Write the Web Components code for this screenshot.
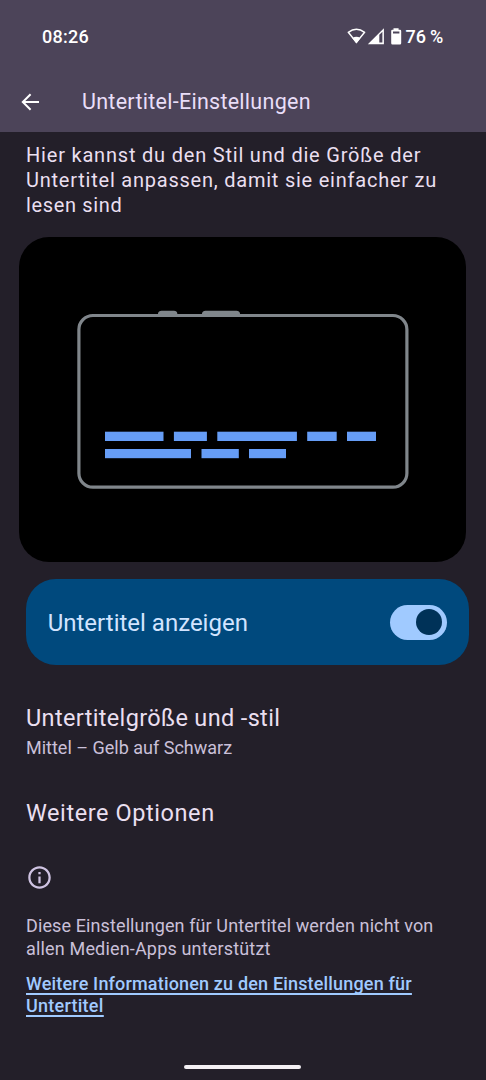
<!DOCTYPE html>
<html lang="de">
<head>
<meta charset="utf-8">
<title>Untertitel-Einstellungen</title>
<style>
html,body{margin:0;height:100%}
body{background:#231f29;font-family:Roboto,"Liberation Sans",sans-serif;overflow:hidden}
</style>
</head>
<body>
<caption-settings></caption-settings>
<script>
const define = (name, html, init) => customElements.define(name, class extends HTMLElement {
  constructor() {
    super();
    this.attachShadow({ mode: 'open' }).innerHTML = html;
  }
  connectedCallback() { if (init) init(this); }
});

// One line of text; size, leading and tracking come from attributes.
define('text-line', `<style>
:host{display:block;white-space:nowrap}
</style><slot></slot>`, el => {
  el.style.fontSize = el.getAttribute('size') + 'px';
  el.style.lineHeight = el.getAttribute('leading') + 'px';
  el.style.letterSpacing = (el.getAttribute('tracking') || 0) + 'px';
});

define('status-bar', `<style>
:host{display:flex;box-sizing:border-box;height:72px;align-items:center;justify-content:space-between;padding:1px 43px 0 42px;color:#fff;font-weight:500}
.right{display:flex;align-items:center}
svg{display:block;margin-top:-1px}
</style>
<text-line size="18" leading="71" tracking=".25">08:26</text-line>
<div class="right">
<svg width="60" height="20" viewBox="346 26 60 20" fill="none">
<path d="M348.3 32.3Q356.4 26.2 364.6 32.3L356.4 42.4Z" stroke="#fff" stroke-width="1.5" stroke-linejoin="round"/>
<path d="M352.4 38Q356.4 35.6 360.4 38L356.4 43.6Z" fill="#fff"/>
<path fill-rule="evenodd" d="M367.8 44.2L383.9 28.3V44.2ZM379.3 34.8V42.6H382.4V31.7Z" fill="#fff"/>
<path fill-rule="evenodd" d="M393.5 28.2H398.6V29.8H400Q401.2 29.8 401.2 31V43.2Q401.2 44.4 400 44.4H392.4Q391.2 44.4 391.2 43.2V31Q391.2 29.8 392.4 29.8H393.5ZM393 31.6V33.5H399.4V31.6Z" fill="#fff"/>
</svg>
<text-line size="18" leading="71" tracking="-.2">76 %</text-line>
</div>`);

define('app-bar', `<style>
:host{display:flex;height:60px;align-items:center;color:#e9def8}
svg{display:block;margin:0 42px 0 18px}
</style>
<svg width="22" height="22" viewBox="0 0 22 22" fill="none" stroke="#fff" stroke-width="2"><path d="M21 11H5M12.6 3.2L4.8 11L12.6 18.8"/></svg>
<text-line size="21.5" leading="60" tracking=".27"><slot></slot></text-line>`);

define('caption-preview', `<style>
:host{display:block;width:447px;height:325px;margin:19px 0 0 19px;background:#000;border-radius:30px;overflow:hidden}
svg{display:block}
</style>
<svg width="447" height="325" viewBox="19 237 447 325">
<path fill="#80868b" d="M158 315V313.5Q158.5 310.8 161.5 310.8H174Q177 310.8 177.3 313.5V315ZM202 315V313.5Q202.5 310.8 205.5 310.8H236.5Q239.5 310.8 240 313.5V315Z"/>
<rect x="78.9" y="315.5" width="328" height="171.7" rx="14" fill="none" stroke="#80868b" stroke-width="3.2"/>
<g fill="#669df6">
<rect x="105" y="431.7" width="58.5" height="9.3"/><rect x="173.9" y="431.7" width="33" height="9.3"/><rect x="217.3" y="431.7" width="79.6" height="9.3"/><rect x="307.2" y="431.7" width="29.5" height="9.3"/><rect x="347" y="431.7" width="29" height="9.3"/>
<rect x="105" y="449" width="86" height="9.2"/><rect x="201.5" y="449" width="37.3" height="9.2"/><rect x="249" y="449" width="37" height="9.2"/>
</g></svg>`);

define('toggle-switch', `<style>
:host{display:flex;box-sizing:border-box;width:56.6px;height:34.6px;padding-right:4.4px;align-items:center;justify-content:flex-end;border-radius:18px;background:#a0caff}
i{width:26px;height:26px;border-radius:50%;background:#003258}
</style><i></i>`);

define('main-switch', `<style>
:host{display:flex;box-sizing:border-box;width:442.6px;height:86px;margin:17.5px 0 0 26px;padding:0 21.9px 0 21.7px;align-items:center;justify-content:space-between;border-radius:30px;background:#00497d;color:#d2e4ff}
text-line{margin-top:1px}
</style>
<text-line size="24" leading="86"><slot></slot></text-line><toggle-switch></toggle-switch>`);

define('preference-item', `<style>
:host{display:block;margin:36.5px 0 0 26px;color:#eadff0}
::slotted([slot=summary]){margin-top:2px;color:#cac0d9}
</style><slot></slot><slot name="summary"></slot>`);

define('info-footer', `<style>
:host{display:block;margin:35px 0 0 26px;color:#cac0d9}
svg{display:block;margin-left:-.5px}
.note{margin-top:24px}
a{display:block;margin-top:12.5px;color:#a0caff;font-weight:500;text-decoration:underline;text-decoration-thickness:1.5px;text-underline-offset:2.5px;text-decoration-skip-ink:none}
a text-line{text-decoration:inherit;width:max-content}
</style>
<svg width="27" height="27" viewBox="0 0 24 24" fill="#cfc3e2"><path d="M11 7h2v2h-2zm0 4h2v6h-2zm1-9C6.48 2 2 6.48 2 12s4.48 10 10 10 10-4.48 10-10S17.52 2 12 2zm0 18c-4.41 0-8-3.59-8-8s3.59-8 8-8 8 3.59 8 8-3.59 8-8 8z"/></svg>
<div class="note">
<text-line size="18" leading="22.5" tracking=".11">Diese Einstellungen für Untertitel werden nicht von</text-line>
<text-line size="18" leading="22.5" tracking=".17">allen Medien-Apps unterstützt</text-line>
</div>
<a>
<text-line size="18" leading="22.5" tracking=".17">Weitere Informationen zu den Einstellungen für</text-line>
<text-line size="18" leading="22.5" tracking=".25">Untertitel</text-line>
</a>`);

define('caption-settings', `<style>
:host{display:flex;flex-direction:column;height:1080px;width:486px;background:#231f29}
header{background:#4c4459;height:132.4px;flex:none}
main{flex:1}
.intro{margin:10.6px 0 0 26px;color:#eadff0}
nav{display:flex;justify-content:center;height:15px;padding-right:1px;flex:none}
nav i{width:117px;height:4px;border-radius:2px;background:#f4f0f4}
</style>
<header><status-bar></status-bar><app-bar>Untertitel-Einstellungen</app-bar></header>
<main>
<div class="intro">
<text-line size="20" leading="25" tracking=".8">Hier kannst du den Stil und die Größe der</text-line>
<text-line size="20" leading="25" tracking=".77">Untertitel anpassen, damit sie einfacher zu</text-line>
<text-line size="20" leading="25" tracking=".65">lesen sind</text-line>
</div>
<caption-preview></caption-preview>
<main-switch>Untertitel anzeigen</main-switch>
<preference-item>
<text-line size="23.5" leading="32" tracking=".35">Untertitelgröße und -stil</text-line>
<text-line slot="summary" size="18" leading="24">Mittel – Gelb auf Schwarz</text-line>
</preference-item>
<preference-item style="margin-top:37.3px"><text-line size="23.5" leading="32" tracking=".58">Weitere Optionen</text-line></preference-item>
<info-footer></info-footer>
</main>
<nav><i></i></nav>`);
</script>
</body>
</html>
